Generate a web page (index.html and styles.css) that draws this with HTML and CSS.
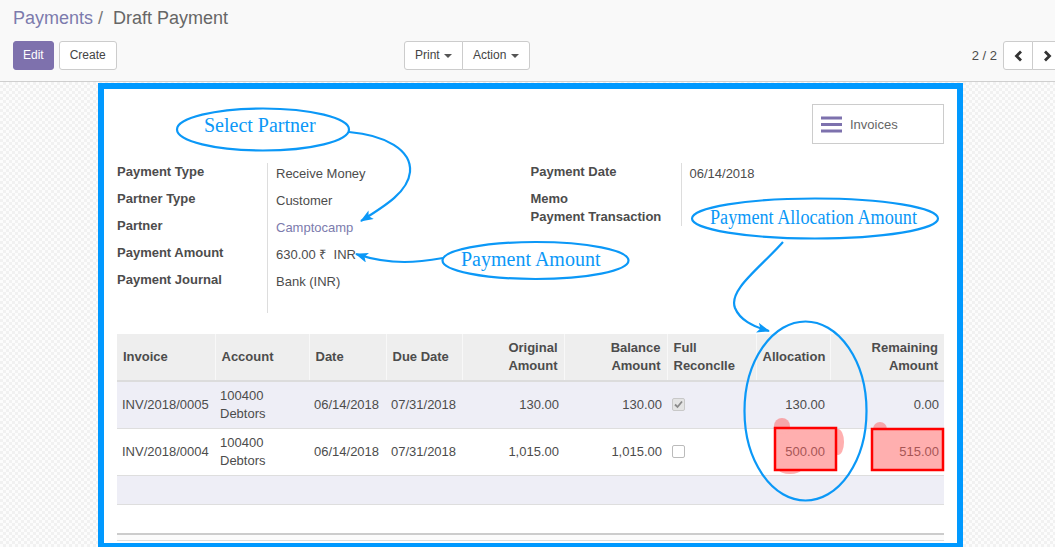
FILE: index.html
```html
<!DOCTYPE html>
<html lang="en">
<head>
<meta charset="utf-8">
<title>Draft Payment</title>
<link rel="stylesheet" href="styles.css">
</head>
<body>
<div class="cp">
  <div class="breadcrumb"><span class="bc-link">Payments</span><span class="bc-sep">/</span><span class="bc-active">Draft Payment</span></div>
  <div class="cp-row">
    <div class="cp-left">
      <button class="btn btn-primary">Edit</button>
      <button class="btn">Create</button>
    </div>
    <div class="cp-center">
      <div class="btn-group">
        <button class="btn">Print <span class="caret"></span></button><button class="btn">Action <span class="caret"></span></button>
      </div>
    </div>
    <div class="cp-right">
      <span class="pager-value">2 / 2</span>
      <div class="btn-group">
        <button class="btn pager-btn"><svg width="9" height="12" viewBox="0 0 9 12"><polyline points="7,1.5 2.5,6 7,10.5" fill="none" stroke="#333" stroke-width="2.8"/></svg></button><button class="btn pager-btn"><svg width="9" height="12" viewBox="0 0 9 12"><polyline points="2,1.5 6.5,6 2,10.5" fill="none" stroke="#333" stroke-width="2.8"/></svg></button>
      </div>
    </div>
  </div>
</div>

<div class="form-bg">
  <div class="sheet">
    <div class="button-box">
      <button class="stat-btn">
        <svg class="stat-icon" width="21" height="17" viewBox="0 0 21 17"><rect x="0" y="0.5" width="21" height="3" fill="#7d71ad"/><rect x="0" y="7" width="21" height="3" fill="#7d71ad"/><rect x="0" y="13.5" width="21" height="3" fill="#7d71ad"/></svg>
        <span>Invoices</span>
      </button>
    </div>

    <div class="groups">
      <div class="group">
        <div class="lbl">Payment Type</div><div class="val">Receive Money</div>
        <div class="lbl">Partner Type</div><div class="val">Customer</div>
        <div class="lbl">Partner</div><div class="val"><span class="link">Camptocamp</span></div>
        <div class="lbl">Payment Amount</div><div class="val">630.00 ₹&nbsp; INR</div>
        <div class="lbl">Payment Journal</div><div class="val">Bank (INR)</div>
        <div class="lbl spacer"></div><div class="val spacer"></div>
      </div>
      <div class="group">
        <div class="lbl">Payment Date</div><div class="val">06/14/2018</div>
        <div class="lbl short">Memo</div><div class="val short"></div>
        <div class="lbl short">Payment Transaction</div><div class="val short"></div>
      </div>
    </div>

    <table class="list">
      <colgroup>
        <col style="width:98px"><col style="width:94px"><col style="width:77px"><col style="width:76px"><col style="width:102px"><col style="width:103px"><col style="width:89px"><col style="width:74px"><col style="width:114px">
      </colgroup>
      <thead>
        <tr>
          <th>Invoice</th>
          <th>Account</th>
          <th>Date</th>
          <th>Due Date</th>
          <th class="num">Original<br>Amount</th>
          <th class="num">Balance<br>Amount</th>
          <th>Full<br>Reconclle</th>
          <th class="num">Allocation</th>
          <th class="num">Remaining<br>Amount</th>
        </tr>
      </thead>
      <tbody>
        <tr class="odd">
          <td>INV/2018/0005</td>
          <td>100400<br>Debtors</td>
          <td>06/14/2018</td>
          <td>07/31/2018</td>
          <td class="num">130.00</td>
          <td class="num">130.00</td>
          <td><span class="cb checked"><svg width="11" height="11" viewBox="0 0 11 11"><polyline points="2,5.5 4.5,8 9,2.5" fill="none" stroke="#8a8a8a" stroke-width="1.8"/></svg></span></td>
          <td class="num">130.00</td>
          <td class="num">0.00</td>
        </tr>
        <tr>
          <td>INV/2018/0004</td>
          <td>100400<br>Debtors</td>
          <td>06/14/2018</td>
          <td>07/31/2018</td>
          <td class="num">1,015.00</td>
          <td class="num">1,015.00</td>
          <td><span class="cb"></span></td>
          <td class="num">500.00</td>
          <td class="num">515.00</td>
        </tr>
        <tr class="odd">
          <td colspan="9">&nbsp;</td>
        </tr>
      </tbody>
    </table>
    <div class="list-foot"></div>
  </div>
</div>

<svg class="annot" width="1055" height="547" viewBox="0 0 1055 547">
  <defs>
    <marker id="ah" markerWidth="13" markerHeight="10" refX="12" refY="5" orient="auto" markerUnits="userSpaceOnUse">
      <path d="M0,0 L13,5 L0,10 L3,5 z" fill="#0b98f7"/>
    </marker>
  </defs>
  <g opacity="0.5" fill="#ff6161">
    <rect x="775" y="428" width="61" height="42"/>
    <circle cx="782" cy="426" r="8"/>
    <ellipse cx="838" cy="442" rx="6" ry="13"/>
    <ellipse cx="790" cy="470" rx="11" ry="4"/>
    <rect x="872" y="429" width="71" height="41"/>
    <circle cx="880" cy="429" r="7"/>
  </g>
  <rect x="775" y="428" width="61" height="42" fill="none" stroke="#ff0000" stroke-width="2.5"/>
  <rect x="872" y="429" width="71" height="41" fill="none" stroke="#ff0000" stroke-width="2.5"/>

  <g fill="none" stroke="#0b98f7" stroke-width="2.2">
    <ellipse cx="263" cy="129.5" rx="86" ry="21"/>
    <ellipse cx="535.5" cy="260.5" rx="93" ry="18.5"/>
    <ellipse cx="815" cy="218.5" rx="123" ry="20"/>
    <ellipse cx="805.5" cy="411" rx="61" ry="89.5"/>
    <path d="M349,132 C385,135 412,150 410,172 C408,192 385,206 361,221" marker-end="url(#ah)"/>
    <path d="M443,258 C420,262 392,266 356,254" marker-end="url(#ah)"/>
    <path d="M783,242 C760,268 728,290 735,308 C740,320 752,326 769,331" marker-end="url(#ah)"/>
  </g>
  <g class="annot-text" fill="#0b98f7">
    <text x="204" y="132">Select Partner</text>
    <text x="461" y="266">Payment Amount</text>
    <text x="710" y="224" textLength="207" lengthAdjust="spacingAndGlyphs">Payment Allocation Amount</text>
  </g>
</svg>
</body>
</html>
```

FILE: styles.css
```css
html, body {
  margin: 0;
  padding: 0;
}
body {
  position: relative;
  width: 1055px;
  height: 547px;
  overflow: hidden;
  font-family: "Liberation Sans", Arial, sans-serif;
  font-size: 13px;
  color: #4c4c4c;
  background: #fff;
}

/* Control panel */
.cp {
  background: #f9f9f9;
  border-bottom: 1px solid #cfcfcf;
  padding: 5px 0 11px 13px;
}
.breadcrumb {
  font-size: 18px;
  line-height: 26px;
  height: 26px;
  white-space: nowrap;
}
.bc-link { color: #7c7bad; }
.bc-sep { color: #777; margin: 0 10px 0 5px; }
.bc-active { color: #666; }

.cp-row {
  margin-top: 10px;
  display: grid;
  grid-template-columns: 391px 1fr auto;
  align-items: center;
  height: 29px;
}
.cp-left { display: flex; gap: 5px; }
.cp-right {
  display: flex;
  align-items: center;
  margin-right: -7px;
}
.pager-value {
  margin-right: 6px;
  color: #4c4c4c;
}

.btn {
  font-family: "Liberation Sans", Arial, sans-serif;
  font-size: 12px;
  line-height: 17px;
  height: 29px;
  box-sizing: border-box;
  padding: 5px 10px;
  border: 1px solid #ccc;
  border-radius: 3px;
  background: #fff;
  color: #444;
  margin: 0;
  white-space: nowrap;
}
.btn-primary {
  background: #7e71ad;
  border-color: #7e71ad;
  color: #fff;
  padding: 5px 9px;
}
.btn-group { display: flex; }
.btn-group .btn { border-radius: 0; }
.btn-group .btn:first-child { border-radius: 3px 0 0 3px; }
.btn-group .btn:last-child { border-radius: 0 3px 3px 0; }
.btn-group .btn + .btn { margin-left: -1px; }
.caret {
  display: inline-block;
  width: 0;
  height: 0;
  border-top: 4px solid #555;
  border-left: 4px solid transparent;
  border-right: 4px solid transparent;
  vertical-align: middle;
  margin-left: 1px;
}
.pager-btn {
  width: 30px;
  padding: 0;
  display: flex;
  align-items: center;
  justify-content: center;
}

/* Form */
.form-bg {
  background-color: #f8f8f8;
  background-image: repeating-conic-gradient(#f1f1f1 0 25%, #fcfcfc 0 50%);
  background-size: 6px 6px;
  padding: 1px 0 0 98px;
  height: 464px;
  overflow: hidden;
}
.sheet {
  width: 865px;
  box-sizing: border-box;
  border: 6px solid #0099ff;
  background: #fff;
  padding: 15px 13px 2px;
}
.button-box {
  display: flex;
  justify-content: flex-end;
  margin-bottom: 19px;
}
.stat-btn {
  width: 132px;
  height: 40px;
  box-sizing: border-box;
  border: 1px solid #ccc;
  background: #fff;
  display: flex;
  align-items: center;
  gap: 8px;
  padding: 0 0 0 8px;
  margin: 0;
  font-family: "Liberation Sans", Arial, sans-serif;
  font-size: 13px;
  color: #666;
}

.groups {
  display: grid;
  grid-template-columns: 1fr 1fr;
}
.group {
  display: grid;
  grid-template-columns: 150px 1fr;
  align-content: start;
}
.lbl {
  font-weight: bold;
  line-height: 18px;
  height: 27px;
  color: #4c4c4c;
}
.val {
  border-left: 1px solid #ddd;
  padding: 2px 0 0 8px;
  line-height: 18px;
  height: 27px;
  box-sizing: border-box;
  color: #4c4c4c;
}
.lbl.short, .val.short { height: 18px; }
.val.short { padding-top: 0; }
.lbl.spacer, .val.spacer { height: 15px; }
.link { color: #7c7bad; }

/* List */
.list {
  margin-top: 21px;
  width: 827px;
  border-collapse: collapse;
  table-layout: fixed;
}
.list th {
  background: #eeeeee;
  font-weight: bold;
  color: #4c4c4c;
  text-align: left;
  padding: 5px 6px 5px;
  line-height: 18px;
  border-bottom: 2px solid #dcdcdc;
  vertical-align: middle;
}
.list th + th { border-left: 1px solid #f8f8f8; }
.list td {
  padding: 5px;
  line-height: 18px;
  border-bottom: 1px solid #dedede;
  vertical-align: middle;
  white-space: nowrap;
  overflow: hidden;
}
.list tr.odd td { background: #eeeef6; }
.list .num { text-align: right; }
.cb {
  display: inline-block;
  width: 13px;
  height: 13px;
  box-sizing: border-box;
  border: 1px solid #bbb;
  border-radius: 2px;
  background: #fff;
  vertical-align: middle;
  position: relative;
  top: -1px;
}
.cb.checked {
  background: #e4e4e4;
  border-color: #c8c8c8;
}
.cb svg { display: block; }
.list-foot {
  margin-top: 28px;
  border-top: 2px solid #cccccc;
  border-bottom: 1px solid #dddddd;
  height: 5px;
  background: #fbfbfb;
}

/* Annotations overlay */
.annot {
  position: absolute;
  left: 0;
  top: 0;
  pointer-events: none;
}
.annot-text text {
  font-family: "Liberation Serif", "Times New Roman", serif;
  font-size: 20px;
}
```
